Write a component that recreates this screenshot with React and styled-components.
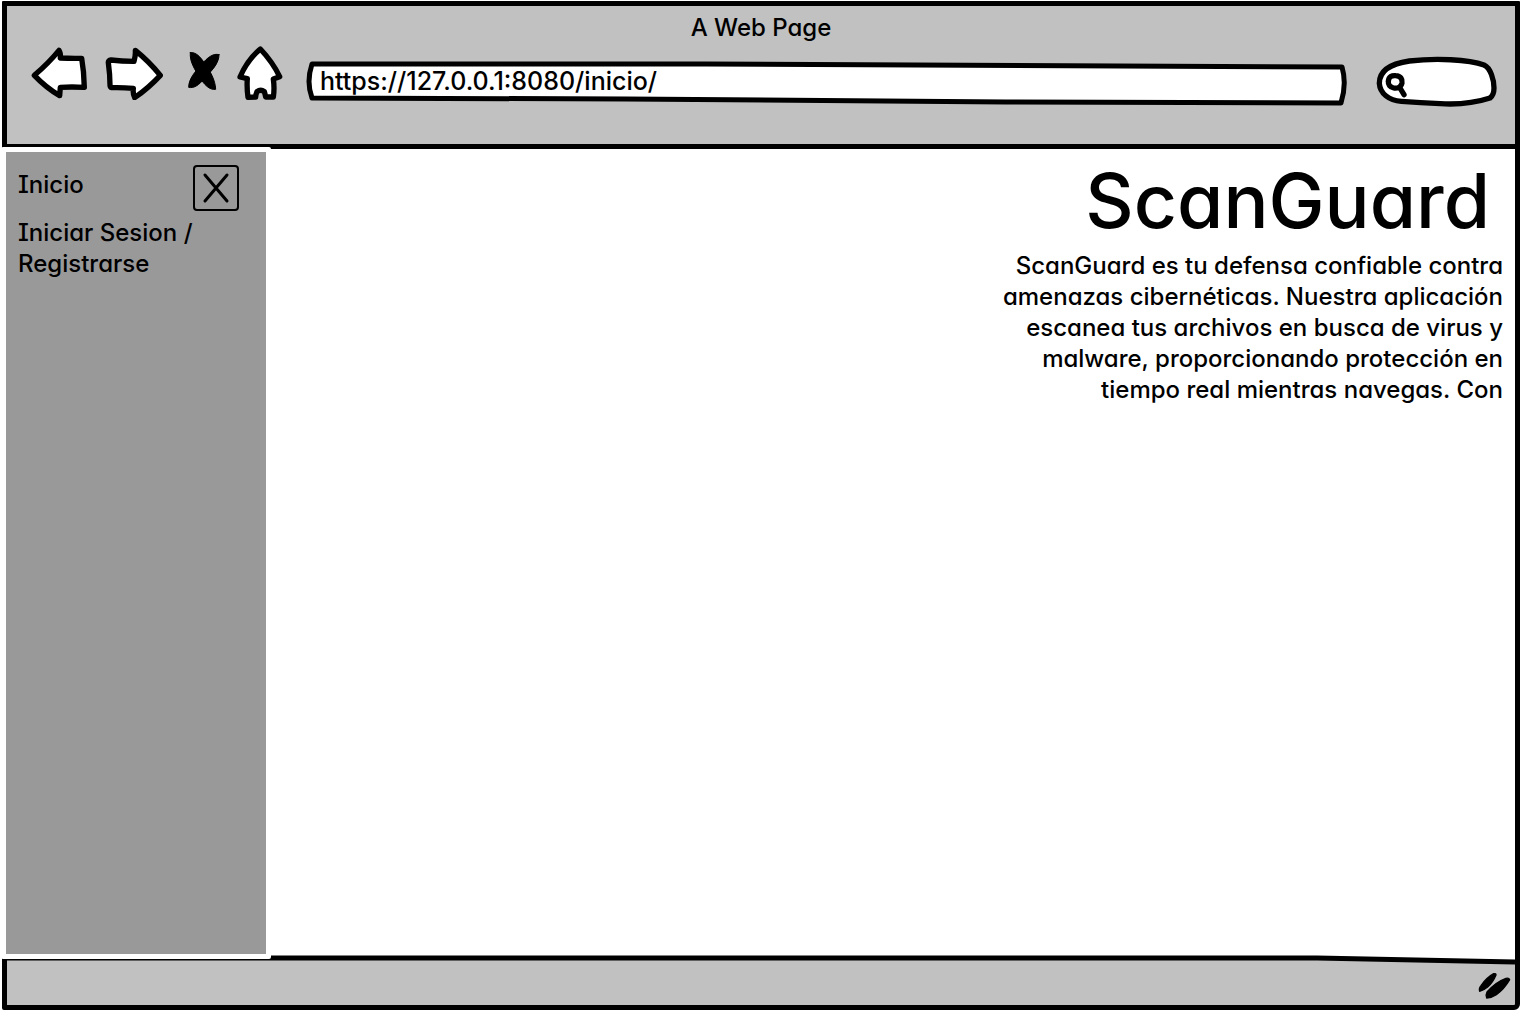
import React from 'react';
import styled, { createGlobalStyle } from 'styled-components';

const GlobalStyle = createGlobalStyle`
  * { box-sizing: border-box; }
  body { margin: 0; background: #fff; }
  body, input, button {
    font-family: Inter, "Noto Sans", sans-serif;
    font-size: 24px;
    font-weight: 500;
    line-height: 31px;
    color: #000;
    font-feature-settings: "cv11" 1;
  }
`;

const Page = styled.div`
  display: flex;
  min-height: 100vh;
  padding: 1px 2px 2px;
`;

const Window = styled.div`
  flex: 1;
  min-width: 0;
  display: flex;
  flex-direction: column;
  border: 5px solid #000;
  border-radius: 1px 1px 6px 2px;
  background: #c1c1c1;
`;

const Header = styled.header`
  height: 143px;
  padding-top: 6px;
  border-bottom: 5px solid #000;
`;

const WindowTitle = styled.div`
  text-align: center;
`;

const Toolbar = styled.div`
  display: flex;
  align-items: flex-start;
  padding: 3px 17px 0 23px;
`;

const IconGroup = styled.div`
  display: flex;
  gap: 14px;
  margin-right: 22px;
`;

const IconButton = styled.button`
  display: block;
  padding: 0;
  border: 0;
  background: none;
  cursor: pointer;
`;

const Sketch = styled.svg`
  display: block;
  fill: ${(p) => p.$fill || '#fff'};
  stroke: #000;
  stroke-width: ${(p) => p.$stroke || 16};
  stroke-linejoin: round;
  stroke-linecap: round;
`;

const Field = styled.label`
  position: relative;
  display: block;
  height: 48px;
  margin-top: 11px;
  flex: ${(p) => (p.$grow ? '1 1 0' : '0 0 122px')};
  min-width: 0;
  margin-left: ${(p) => (p.$grow ? '0' : '28px')};
`;

const FieldOutline = styled(Sketch)`
  position: absolute;
  inset: 0;
  width: 100%;
  height: 100%;
  overflow: visible;
  path { vector-effect: ${(p) => (p.$even ? 'non-scaling-stroke' : 'none')}; }
`;

const FieldInput = styled.input`
  position: relative;
  display: block;
  width: 100%;
  height: 48px;
  padding: 0 14px 0 ${(p) => p.$inset}px;
  border: 0;
  outline: 0;
  background: none;
  font-size: 25px;
`;

const Body = styled.div`
  flex: 1;
  display: flex;
  background: #fff;
`;

const Sidebar = styled.aside`
  position: relative;
  width: 270px;
  margin: -2px 0 -4px -6px;
  padding: 13px 27px 13px 12px;
  border: 5px solid #fff;
  border-radius: 2px;
  background: #999;
`;

const SidebarTop = styled.div`
  display: flex;
  justify-content: space-between;
  align-items: flex-start;
  margin-bottom: 6px;
`;

const NavLink = styled.a`
  display: block;
  padding-top: ${(p) => (p.$first ? 4 : 0)}px;
  color: inherit;
  text-decoration: none;
  font-feature-settings: "cv11" 1, "cv08" 1;
`;

const CloseButton = styled.button`
  display: flex;
  align-items: center;
  justify-content: center;
  width: 46px;
  height: 46px;
  padding: 0;
  border: 2px solid #000;
  border-radius: 4px;
  background: none;
  cursor: pointer;
`;

const Main = styled.main`
  flex: 1;
  padding: 7px 12px 0;
  text-align: right;
`;

const Heading = styled.h1`
  margin: 0 13px 4px 0;
  font-size: 75px;
  line-height: 90px;
  font-weight: 500;
`;

const Intro = styled.p`
  margin: 0;
`;

const Line = styled.span`
  display: block;
`;

const Rule = styled.svg`
  display: block;
  width: 100%;
  height: 10px;
  background: #c1c1c1;
`;

const Footer = styled.footer`
  display: flex;
  justify-content: flex-end;
  height: 40px;
  padding: 7px 4px 0;
`;

const LINES = [
  'ScanGuard es tu defensa confiable contra',
  'amenazas cibernéticas. Nuestra aplicación',
  'escanea tus archivos en busca de virus y',
  'malware, proporcionando protección en',
  'tiempo real mientras navegas. Con',
];

export default function App() {
  return (
    <Page>
      <GlobalStyle />
      <Window>
        <Header>
          <WindowTitle>A Web Page</WindowTitle>
          <Toolbar>
            <IconGroup>
              <IconButton type="button" aria-label="Back">
                <Sketch width="60" height="54" viewBox="90 138 180 162">
                  <path d="M103 226 Q145 190 177 151 Q183 161 181 174 Q215 176 245 175 Q252 215 253 262 Q215 260 181 262 L179 287 Q137 262 103 226Z" />
                </Sketch>
              </IconButton>
              <IconButton type="button" aria-label="Forward">
                <Sketch width="66" height="54" viewBox="312 138 198 162">
                  <path d="M325 188 Q324 181 333 180 Q365 184 402 184 Q407 168 406 151 Q447 184 481 226 Q447 263 404 293 Q398 281 400 265 Q366 262 335 263 Q330 262 330 255 Q330 225 325 188Z" />
                </Sketch>
              </IconButton>
              <IconButton type="button" aria-label="Stop">
                <Sketch $fill="#000" $stroke={3} width="38" height="54" viewBox="552 138 114 162">
                  <path d="M571 158 C588 155 602 172 614 190 C630 212 646 240 647 268 C628 271 612 253 599 232 C584 208 568 184 571 158Z" />
                  <path d="M657 164 C640 158 621 174 606 192 C586 214 566 236 566 262 C582 266 598 254 613 236 C634 213 658 190 657 164Z" />
                </Sketch>
              </IconButton>
              <IconButton type="button" aria-label="Home">
                <Sketch width="48" height="54" viewBox="708 138 144 162">
                  <path d="M781 147 Q818 186 839 230 L820 237 Q824 265 820 291 L797 291 Q795 281 793 275 Q782 266 771 275 Q767 284 767 291 L744 292 Q740 264 742 236 L720 231 Q742 180 781 147Z" />
                </Sketch>
              </IconButton>
            </IconGroup>
            <Field $grow>
              <FieldOutline $even $stroke={5} viewBox="0 0 1042 48" preserveAspectRatio="none" aria-hidden="true">
                <path d="M6 7 L400 7 L1036 10 Q1041 27 1035 46 L700 45 L320 42 L6 41 Q0 25 6 7Z" />
              </FieldOutline>
              <FieldInput $inset={14} aria-label="Address" defaultValue="https://127.0.0.1:8080/inicio/" />
            </Field>
            <Field>
              <FieldOutline viewBox="162 171 366 144" aria-hidden="true">
                <path d="M238 304 C200 301 174 280 172 250 C172 213 206 191 262 183 C340 174 440 178 486 195 C506 204 516 240 516 264 Q516 285 504 294 C455 310 405 314 355 311 Q295 308 238 304Z" />
                <path d="M199 244 C200 229 210 226 221 227 C236 228 242 237 240 249 C237 262 226 266 215 264 C204 262 198 254 199 244Z M234 264 L246 284" />
              </FieldOutline>
              <FieldInput $inset={34} aria-label="Search" />
            </Field>
          </Toolbar>
        </Header>
        <Body>
          <Sidebar>
            <SidebarTop>
              <NavLink $first href="#inicio">Inicio</NavLink>
              <CloseButton type="button" aria-label="Close">
                <Sketch $fill="none" $stroke={3} width="28" height="32" viewBox="0 0 28 32">
                  <path d="M3 3 L25 29 M25 3 L3 29" />
                </Sketch>
              </CloseButton>
            </SidebarTop>
            <NavLink href="#sesion">Iniciar Sesion / Registrarse</NavLink>
          </Sidebar>
          <Main>
            <Heading>ScanGuard</Heading>
            <Intro>
              {LINES.map((line) => (
                <Line key={line}>{line} </Line>
              ))}
            </Intro>
          </Main>
        </Body>
        <Rule viewBox="0 0 1508 10" preserveAspectRatio="none" aria-hidden="true">
          <path fill="#fff" d="M0 0 H1508 V6 L1310 2 H0Z" />
          <path fill="none" stroke="#000" strokeWidth="5" d="M0 3 L1310 3 L1508 7" />
        </Rule>
        <Footer>
          <Sketch $fill="#000" $stroke={4} width="34" height="28" viewBox="466 129 102 84" aria-hidden="true">
            <path d="M474 187 Q471 178 478 170 Q494 146 516 134 Q524 133 523 138 Q514 160 498 174 Q486 184 474 187Z" />
            <path d="M495 207 Q491 198 496 189 Q522 159 553 148 Q562 146 564 152 Q548 180 524 197 Q509 207 495 207Z" />
          </Sketch>
        </Footer>
      </Window>
    </Page>
  );
}
